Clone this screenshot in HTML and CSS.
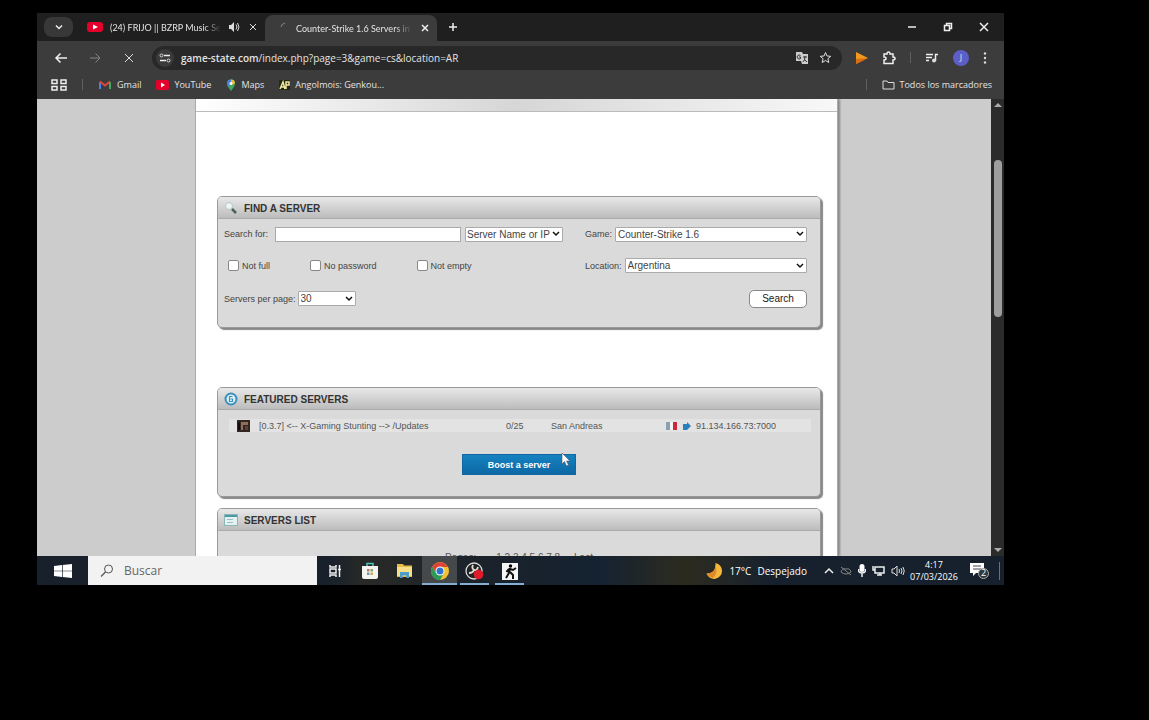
FILE: index.html
```html
<!DOCTYPE html>
<html lang="es">
<head>
<meta charset="utf-8">
<title>Counter-Strike 1.6 Servers in Argentina</title>
<link rel="stylesheet" href="styles.css">
</head>
<body>
<div class="screen">
  <header class="browser">
    <div class="tabs">
      <button class="tab-search" aria-label="Buscar pestañas"><svg width="10" height="10" viewBox="0 0 10 10"><path d="M2 3.500l3 3 3-3" class="line bold"/></svg></button>
      <div class="tab">
        <svg width="16" height="10" viewBox="0 0 16 10"><rect width="16" height="10" rx="3" fill="#e4002b"/><path d="M6 2.500l5 2.500-5 2.500z" fill="#fff"/></svg>
        <span class="tab-title">(24) FRIJO || BZRP Music Se</span>
        <svg width="12" height="12" viewBox="0 0 12 12"><path d="M1 4h2l3-3v10l-3-3H1z" fill="#ddd"/><path d="M8 3.500q2 2.500 0 5M9.500 2q3 4 0 8" class="line"/></svg>
        <button class="plain close" aria-label="Cerrar"><svg width="8" height="8" viewBox="0 0 8 8"><path d="M1 1l6 6M7 1l-6 6" class="line"/></svg></button>
      </div>
      <div class="tab active">
        <svg width="10" height="12" viewBox="0 0 10 12"><path d="M2 5q0-3 4-4" class="line dim"/></svg>
        <span class="tab-title">Counter-Strike 1.6 Servers in A</span>
        <button class="plain close" aria-label="Cerrar"><svg width="8" height="8" viewBox="0 0 8 8"><path d="M1 1l6 6M7 1l-6 6" class="line bold"/></svg></button>
      </div>
      <button class="plain new-tab" aria-label="Nueva pestaña"><svg width="10" height="10" viewBox="0 0 10 10"><path d="M5 1v8M1 5h8" class="line bold"/></svg></button>
      <div class="window-buttons">
        <button class="plain" aria-label="Minimizar"><svg width="10" height="10" viewBox="0 0 10 10"><path d="M1 5h8" class="line bold"/></svg></button>
        <button class="plain" aria-label="Restaurar"><svg width="10" height="10" viewBox="0 0 10 10"><path d="M1.500 3.500h5v5h-5zM3.500 3V1.500h5v5H7" class="line bold"/></svg></button>
        <button class="plain" aria-label="Cerrar ventana"><svg width="10" height="10" viewBox="0 0 10 10"><path d="M1 1l8 8M9 1l-8 8" class="line bold"/></svg></button>
      </div>
    </div>
    <div class="toolbar">
      <div class="nav">
        <button class="plain" aria-label="Atrás"><svg width="14" height="12" viewBox="0 0 14 12"><path d="M13 6H2M6.500 1.500L2 6l4.500 4.500" class="line bold"/></svg></button>
        <button class="plain" aria-label="Adelante"><svg width="14" height="12" viewBox="0 0 14 12"><path d="M2 6h10M7.500 1.500L12 6l-4.500 4.500" class="line dim"/></svg></button>
        <button class="plain" aria-label="Detener"><svg width="14" height="12" viewBox="0 0 14 12"><path d="M3 2l8 8M11 2l-8 8" class="line"/></svg></button>
      </div>
      <div class="address">
        <span class="site-info"><svg width="12" height="12" viewBox="0 0 12 12"><path d="M5 3.500h6M1 8.500h6" class="line bold"/><circle cx="2.500" cy="3.500" r="1.500" class="line"/><circle cx="9.500" cy="8.500" r="1.500" class="line"/></svg></span>
        <span class="url"><b>game-state.com</b>/index.php?page=3&amp;game=cs&amp;location=AR</span>
        <button class="plain" aria-label="Traducir"><svg width="14" height="14" viewBox="0 0 14 14"><path d="M1 1h6l1 2h5v10H7l-1-3H1z" fill="#ccc"/><path d="M5.500 4.500a2 2 0 1 0 0 3V6H4" stroke="#333" fill="none"/><path d="M8 6h4M10 5v1q0 3-2 5M9 8l3 3" stroke="#333" fill="none"/></svg></button>
        <button class="plain" aria-label="Guardar marcador"><svg width="13" height="13" viewBox="0 0 13 13"><path d="M6.500 1.500l1.500 3.500 3.800.3-2.900 2.400.9 3.800-3.300-2-3.300 2 .9-3.800L1.200 5.300 5 5z" class="line"/></svg></button>
      </div>
      <div class="extensions">
        <svg width="12" height="12" viewBox="0 0 12 12"><path d="M0 0l12 6-12 6z" fill="#f29a1f"/><path d="M0 12V7l12-1z" fill="#dc6c12"/></svg>
        <svg width="14" height="14" viewBox="0 0 14 14"><path d="M2 3h3q0-2 1.500-2T8 3h3v3q2 0 2 1.500T11 9v3.500H2V9q2 0 2-1.500T2 6z" class="line bold"/></svg>
        <i class="bar"></i>
        <svg width="14" height="12" viewBox="0 0 14 12"><path d="M1 2.500h7M1 5.500h6M1 8.500h3" class="line bold"/><path d="M10.500 9V2.500H13" class="line bold"/><circle cx="9" cy="8.500" r="2" fill="#ddd"/></svg>
        <span class="avatar">J</span>
        <svg width="4" height="12" viewBox="0 0 4 12" fill="#ddd"><circle cx="2" cy="1.500" r="1.200"/><circle cx="2" cy="6" r="1.200"/><circle cx="2" cy="10.500" r="1.200"/></svg>
      </div>
    </div>
    <nav class="bookmarks">
      <svg width="16" height="12" viewBox="0 0 16 12"><path d="M1 1h5v3.500H1zM10 1h5v3.500h-5zM1 7.500h5V11H1zM10 7.500h5V11h-5z" class="line bold"/></svg>
      <i class="bar"></i>
      <a href="#"><svg width="14" height="10" viewBox="0 0 14 10"><path d="M2 9V2" stroke="#4a82e8" stroke-width="2"/><path d="M2 1.500l5 4 5-4" fill="none" stroke="#e5433a" stroke-width="2"/><path d="M12 9V2" stroke="#42a85a" stroke-width="2"/></svg>Gmail</a>
      <a href="#"><svg width="13" height="10" viewBox="0 0 13 10"><rect width="13" height="10" rx="2" fill="#e4002b"/><path d="M5 2.500l4 2.500-4 2.500z" fill="#fff"/></svg>YouTube</a>
      <a href="#"><svg width="10" height="12" viewBox="0 0 10 12"><path d="M5 12Q1 7 1 4.500a4 4 0 0 1 8 0Q9 7 5 12z" fill="#3fa958"/><path d="M1 4.500A4 4 0 0 1 5 .5V5L2 8z" fill="#4a80dd"/><path d="M5 .5a4 4 0 0 1 4 4L5 6z" fill="#e7bd35"/><circle cx="5" cy="4.500" r="1.500" fill="#fff"/></svg>Maps</a>
      <a href="#"><svg width="11" height="10" viewBox="0 0 11 10"><rect width="11" height="10" fill="#242815"/><path d="M1 9l3-7 2 7M2 7h3M7 9V2h3v3H7" fill="none" stroke="#eee8a0" stroke-width="1.500"/></svg>Angolmois: Genkou...</a>
      <i class="bar push"></i>
      <a href="#"><svg width="13" height="10" viewBox="0 0 13 10"><path d="M1 1h4l1 1.500h6V9H1z" class="line"/></svg>Todos los marcadores</a>
    </nav>
  </header>

  <div class="viewport">
    <main class="page">
      <div class="banner"></div>
      <section class="panel find">
        <h2><svg width="14" height="14" viewBox="0 0 14 14"><circle cx="5" cy="5" r="3.500" fill="#edf5f5" stroke="#b8c4c4"/><path d="M8 8l4 4" stroke="#4b6258" stroke-width="2.500"/></svg>FIND A SERVER</h2>
        <form class="form">
          <div class="row">
            <div class="left">
              <label for="q">Search for:</label><input class="text" id="q" type="text">
              <select class="by" aria-label="Search by"><option>Server Name or IP</option></select>
            </div>
            <div class="right"><label for="game">Game:</label><select id="game"><option>Counter-Strike 1.6</option></select></div>
          </div>
          <div class="row">
            <div class="left checks">
              <label><input type="checkbox">Not full</label>
              <label><input type="checkbox">No password</label>
              <label><input type="checkbox">Not empty</label>
            </div>
            <div class="right"><label for="loc">Location:</label><select id="loc"><option>Argentina</option></select></div>
          </div>
          <div class="row">
            <div class="left"><label for="per">Servers per page:</label><select class="per" id="per"><option>30</option></select></div>
            <div class="right end"><button class="search" type="button">Search</button></div>
          </div>
        </form>
      </section>

      <section class="panel featured">
        <h2><svg width="14" height="14" viewBox="0 0 14 14"><circle cx="7" cy="7" r="5.500" fill="#e2f2f8" stroke="#3790be" stroke-width="2"/><path d="M8.500 4.500h-3v5h3v-2.500h-2" fill="none" stroke="#3790be" stroke-width="1.200"/></svg>FEATURED SERVERS</h2>
        <table class="servers">
          <tr>
            <td class="c-icon"><svg width="13" height="12" viewBox="0 0 13 12"><rect width="13" height="12" fill="#33251f"/><path d="M4 2h7v3H6v5H4z" fill="#8f705e"/><path d="M8 6h3v4H8z" fill="#59433a"/><path d="M1 2l2 1v7H1z" fill="#120d0c"/></svg></td>
            <td class="c-name">[0.3.7] &lt;-- X-Gaming Stunting --&gt; /Updates</td>
            <td class="c-players">0/25</td>
            <td class="c-map">San Andreas</td>
            <td class="c-addr"><span><svg width="26" height="10" viewBox="0 0 26 10"><path d="M1 1h4v8H1z" fill="#8ba0b3"/><path d="M5 1h3v8H5z" fill="#f3f3f3"/><path d="M8 1h4v8H8z" fill="#cb2740"/><path d="M18 3h4V1l4 4-4 4H18z" fill="#2c7fbd"/></svg>91.134.166.73:7000</span></td>
          </tr>
        </table>
        <button class="boost" type="button">Boost a server</button>
      </section>

      <section class="panel list">
        <h2><svg width="14" height="12" viewBox="0 0 14 12"><rect x=".5" y=".5" width="13" height="11" fill="#e5f0f0" stroke="#8bb6b9"/><path d="M1 2h12" stroke="#4c9ba4" stroke-width="2"/><path d="M3 5.500h6M3 8.500h6" stroke="#9dc0c2"/></svg>SERVERS LIST</h2>
        <p class="pages"><span>Pages:</span><span>1 2 3 4 5 6 7 8 ... Last</span></p>
      </section>
    </main>
    <div class="scrollbar"><i class="arrow up"></i><i class="thumb"></i><i class="arrow down"></i></div>
    <svg class="cursor" width="10" height="15" viewBox="0 0 10 15"><path d="M1 1v11l2.500-2.500L5.500 14l2-1-2-4H9z" fill="#fff" stroke="#556" stroke-width=".6"/></svg>
  </div>

  <footer class="taskbar">
    <button class="plain start" aria-label="Inicio"><svg width="18" height="14" viewBox="0 0 18 14" fill="#fff"><path d="M0 2l8-1v5.700H0zM8.700.9L18 0v6.700H8.700zM0 7.300h8V13l-8-1zM8.700 7.300H18V14l-9.300-.9z"/></svg></button>
    <label class="buscar"><svg width="16" height="16" viewBox="0 0 16 16"><circle cx="9.500" cy="6" r="4" fill="none" stroke="#555"/><path d="M6.500 9L2 13.500" stroke="#555" stroke-width="1.200"/></svg><input type="text" placeholder="Buscar" aria-label="Buscar"></label>
    <div class="apps">
      <button class="plain" aria-label="Vista de tareas"><svg width="14" height="12" viewBox="0 0 14 12"><path d="M2 0v2h6V0M2 12v-2h6v2M2 4h6v4H2zM11.500 0v12M10 4.500h3" class="line bold"/></svg></button>
      <button class="plain" aria-label="Tienda"><svg width="18" height="18" viewBox="0 0 18 18"><path d="M6 5V1.500h6V5" fill="none" stroke="#4cc4b4" stroke-width="1.500"/><path d="M1 4h16v11q0 2-2 2H3q-2 0-2-2z" fill="#f5f5ef"/><path d="M6 7h2.500v2.500H6z" fill="#bc7a63"/><path d="M9.500 7H12v2.500H9.500z" fill="#8fa06d"/><path d="M6 10.500h2.500V13H6z" fill="#7195b5"/><path d="M9.500 10.500H12V13H9.500z" fill="#c5ac5c"/></svg></button>
      <button class="plain" aria-label="Explorador"><svg width="17" height="14" viewBox="0 0 17 14"><path d="M1 0h6l1 1.500h8V13H1z" fill="#e5bd45"/><path d="M1 3h15v9H1z" fill="#f7df87"/><path d="M4 8h9v6h-2.500v-2.500h-4V14H4z" fill="#4b9dcb"/></svg></button>
      <button class="plain open current" aria-label="Chrome"><svg width="18" height="18" viewBox="0 0 18 18"><circle cx="9" cy="9" r="9" fill="#f2c230"/><path d="M1.200 4.500A9 9 0 0 0 9 18l4-7H5z" fill="#2b9a56"/><path d="M1.200 4.500L5 11l4-6h7.800A9 9 0 0 0 1.200 4.500z" fill="#db4437"/><circle cx="9" cy="9" r="4.500" fill="#fff"/><circle cx="9" cy="9" r="3.500" fill="#2f74d0"/></svg></button>
      <button class="plain open" aria-label="OBS"><svg width="20" height="18" viewBox="0 0 20 18"><circle cx="9" cy="9" r="8" fill="#222" stroke="#ddd" stroke-width="1.300"/><path d="M8 3q-2 4 2 5M4 11q4 0 5-3M13 5q-1 4-4 3" fill="none" stroke="#ddd" stroke-width="1.800"/><circle cx="13.500" cy="12.500" r="4.800" fill="#df1b2a"/></svg></button>
      <button class="plain open" aria-label="Counter-Strike"><svg width="16" height="17" viewBox="0 0 16 17"><rect width="16" height="17" fill="#f5f5f5"/><circle cx="8.500" cy="3" r="1.700"/><path d="M8 5l-1 5-3 5M8 9l3 3v4M7 6L4.500 9M8 6l3 1 3-2" fill="none" stroke="#111" stroke-width="2"/></svg></button>
    </div>
    <div class="weather"><svg width="17" height="17" viewBox="0 0 17 17"><path d="M9.500 1a8 8 0 1 1-9 10.500Q10 12 9.500 1z" fill="#f5b83d"/><path d="M.5 11.500Q9 12 9.500 4q3 8-3 12-4-1-6-4.500z" fill="#df8928"/></svg><span>17°C</span><span>Despejado</span></div>
    <div class="tray">
      <svg width="10" height="8" viewBox="0 0 10 8"><path d="M1 6l4-4 4 4" class="line bold"/></svg>
      <svg width="12" height="10" viewBox="0 0 12 10"><path d="M1 6q1-4 5-3 4-1 5 3-2 2-5 2T1 6zM1 1l10 8" class="line dim"/></svg>
      <svg width="8" height="13" viewBox="0 0 8 13"><rect x="1.500" width="5" height="8" rx="2.500" fill="#fff"/><path d="M.5 5v2Q1 9 4 9t3.500-2V5M4 9v4" class="line bold"/></svg>
      <svg width="13" height="11" viewBox="0 0 13 11"><path d="M3 2h9v6H3zM5 10h5M1 1v4h2M8 8v2" class="line bold"/></svg>
      <svg width="14" height="12" viewBox="0 0 14 12"><path d="M1 4h2l3-3v10L3 8H1zM8 4q1 2 0 4M10 3q2 3 0 6M12 2q2.500 4 0 8" class="line"/></svg>
    </div>
    <div class="clock"><span>4:17</span><span>07/03/2026</span></div>
    <div class="notices"><svg width="20" height="18" viewBox="0 0 20 18"><path d="M0 1h14v10H6l-3 3v-3H0z" fill="#fff"/><path d="M3 4h8M3 7h8" stroke="#445"/><circle cx="13.500" cy="11.500" r="5" fill="#303840" stroke="#aaa"/></svg><span class="count">2</span></div>
  </footer>
</div>
</body>
</html>
```

FILE: styles.css
```css
* { box-sizing: border-box; }
body {
  margin: 0;
  height: 100vh;
  padding: 13px 145px 135px 37px;
  background: #000;
  font-family: "Liberation Sans", Arial, sans-serif;
  font-size: 9px;
}
svg { display: block; flex: none; }
.line { fill: none; stroke: #ddd; stroke-width: 1; }
.bold { stroke-width: 1.5; stroke: #eee; }
.dim { stroke: #858585; }
.plain {
  display: flex;
  align-items: center;
  justify-content: center;
  padding: 0;
  border: 0;
  background: none;
}
.screen { height: 100%; display: flex; flex-direction: column; overflow: hidden; }

/* Browser frame */
.browser { background: #3c3c3c; color: #e3e3e3; font-family: "Open Sans", sans-serif; font-size: 9px; }
.tabs { display: flex; align-items: center; height: 28px; padding-left: 7px; background: #1f1f1f; }
.tab-search {
  display: flex;
  align-items: center;
  justify-content: center;
  width: 29px;
  height: 20px;
  padding: 0;
  border: 0;
  border-radius: 8px;
  background: #383838;
}
.tab { display: flex; align-items: center; gap: 7px; width: 192px; height: 26px; padding: 0 6px 0 14px; }
.tab-title {
  flex: 1;
  min-width: 0;
  overflow: hidden;
  white-space: nowrap;
  font-family: Lato, sans-serif;
  mask-image: linear-gradient(90deg, #000 85%, transparent);
}
.close { width: 12px; }
.tab.active { align-self: flex-end; width: 172px; border-radius: 8px 8px 0 0; background: #3c3c3c; }
.new-tab { width: 32px; height: 24px; }
.window-buttons { display: flex; gap: 26px; margin-left: auto; padding-right: 15px; }
.toolbar { display: flex; align-items: center; height: 33px; }
.nav { display: flex; gap: 20px; width: 115px; padding-left: 17px; }
.address {
  display: flex;
  flex: 1;
  align-items: center;
  gap: 10px;
  height: 24px;
  padding: 0 10px 0 4px;
  border-radius: 12px;
  background: #282828;
  font-size: 10px;
}
.site-info { display: grid; place-items: center; width: 18px; height: 18px; margin-right: -3px; border-radius: 50%; background: #3a3a3a; }
.url { flex: 1; white-space: nowrap; }
.url b { font-weight: 600; }
.extensions { display: flex; align-items: center; gap: 14px; padding: 0 17px 0 14px; }
.avatar { display: grid; place-items: center; width: 16px; height: 16px; border-radius: 50%; background: #5b5fc7; }
.bar { width: 1px; height: 11px; background: #606060; }
.bookmarks { display: flex; align-items: center; gap: 15px; height: 25px; padding: 0 12px 4px 14px; }
.bookmarks a { display: flex; align-items: center; gap: 5px; color: inherit; text-decoration: none; white-space: nowrap; }
.bookmarks .push { margin-left: auto; }

/* Web page */
.viewport { position: relative; display: flex; flex: 1; min-height: 0; overflow: hidden; background: #ccc; }
.page {
  flex: 1;
  align-self: stretch;
  margin: 0 153px 0 158px;
  border: 1px solid #aaa;
  border-width: 0 1px;
  background: #fff;
  box-shadow: 2px 0 2px #888;
}
.banner { height: 13px; border-bottom: 1px solid #bbb; background: linear-gradient(90deg, #fff, #d6d6d6 50%, #f8f8f8); }
.panel {
  margin: 0 16px 0 21px;
  border: 1px solid #999;
  border-radius: 5px;
  background: #dadada;
  box-shadow: 2px 2px 1px #888;
  overflow: hidden;
}
.panel h2 {
  display: flex;
  align-items: center;
  gap: 6px;
  height: 22px;
  margin: 0;
  padding: 1px 6px 0;
  border-bottom: 1px solid #aaa;
  background: linear-gradient(#e8e8e8, #bcbcbc);
  color: #333;
  font: bold 10px "Liberation Sans", Arial, sans-serif;
}
.find { height: 132px; margin-top: 84px; }
.form { display: flex; flex-direction: column; padding: 0 13px 0 6px; color: #444; }
.row { display: flex; align-items: center; height: 33px; }
.row:first-child { height: 30px; }
.left { display: flex; flex: 1; align-items: center; }
.right { display: flex; align-items: center; gap: 3px; width: 222px; }
.end { justify-content: flex-end; }
.text { flex: 1; min-width: 0; height: 15px; margin-left: 7px; border: 1px solid #aaa; background: #fff; }
select {
  flex: 1;
  min-width: 0;
  height: 15px;
  padding: 0 12px 0 2px;
  border: 1px solid #aaa;
  border-radius: 1px;
  appearance: none;
  background: #fff url("data:image/svg+xml,%3Csvg xmlns='http://www.w3.org/2000/svg' width='8' height='6'%3E%3Cpath d='M1 1l3 3 3-3' fill='none' stroke='%23111' stroke-width='1.500'/%3E%3C/svg%3E") no-repeat right 2px center;
  color: #444;
  font: 10px "Liberation Sans", Arial, sans-serif;
}
.by { flex: none; width: 98px; padding: 0 10px 0 1px; margin: 0 22px 0 4px; }
.per { flex: none; width: 58px; margin-left: 2px; }
.checks { gap: 40px; padding-left: 4px; }
.checks label { display: flex; align-items: center; gap: 3px; }
.checks input { width: 11px; height: 11px; margin: 0; border: 1px solid #888; border-radius: 2px; appearance: none; background: #fff; }
.search { width: 58px; height: 18px; padding: 0; border: 1px solid #888; border-radius: 5px; background: #fff; color: #222; font: 10px "Liberation Sans", Arial, sans-serif; }
.featured { height: 110px; margin-top: 59px; }
.servers { width: calc(100% - 20px); margin: 9px 9px 0 11px; border-collapse: collapse; table-layout: fixed; background: #e3e3e3; color: #555; }
.servers td { height: 13px; padding: 0; white-space: nowrap; }
.servers .c-icon { width: 30px; padding-left: 8px; }
.c-players { width: 45px; }
.c-map { width: 114px; }
.c-addr { width: 146px; }
.c-addr span { display: flex; align-items: center; gap: 5px; }
.boost {
  display: block;
  width: 114px;
  height: 21px;
  margin: 22px auto 0;
  padding: 0;
  border: 1px solid #1267a0;
  background: linear-gradient(#1682c0, #0c68a5);
  color: #fff;
  font: bold 9px "Liberation Sans", Arial, sans-serif;
}
.list { height: 90px; margin-top: 11px; }
.pages { display: flex; justify-content: center; gap: 20px; margin: 21px 0 0; color: #555; font-size: 10px; }
.scrollbar { display: flex; flex-direction: column; align-items: center; width: 13px; padding: 4px 0; background: #2b2b2b; }
.thumb { width: 8px; height: 35%; margin-top: 53px; border-radius: 4px; background: #9e9e9e; }
.arrow { border: 4px solid transparent; }
.up { border-top: 0; border-bottom-color: #aaa; }
.down { margin-top: auto; border-bottom: 0; border-top-color: #aaa; }
.cursor { position: absolute; left: 524px; top: 353px; }

/* Taskbar */
.taskbar { display: flex; align-items: center; height: 29px; background: linear-gradient(90deg, #17202b 0 30%, #292a27 34%, #1b222a 45%, #152231 58%, #2c2b1f 67%, #17212d 76%); color: #fff; font: 10px "Open Sans", sans-serif; }
.start { width: 51px; }
.buscar { display: flex; align-items: center; gap: 9px; width: 229px; height: 100%; padding: 0 11px; background: #f2f2f2; }
.buscar input { flex: 1; min-width: 0; padding: 0; border: 0; background: none; font: 12px "Open Sans", sans-serif; }
.buscar input::placeholder { color: #666; }
.apps { display: flex; height: 100%; }
.apps button { width: 35px; padding-top: 1px; }
.apps .open { background: linear-gradient(#83afd5, #83afd5) center bottom / 29px 2px no-repeat; }
.apps .current { background-color: #46494c; background-size: 35px 2px; }
.weather { display: flex; align-items: center; gap: 6px; margin-left: auto; }
.tray { display: flex; align-items: center; gap: 6px; padding-left: 17px; }
.clock { display: flex; flex-direction: column; align-items: center; width: 58px; line-height: 12px; font-size: 9px; }
.notices { position: relative; padding-right: 9px; margin: 0 4px 0 7px; border-right: 1px solid #6b7178; }
.count { position: absolute; left: 11px; top: 5px; font-size: 9px; line-height: 12px; }
```
